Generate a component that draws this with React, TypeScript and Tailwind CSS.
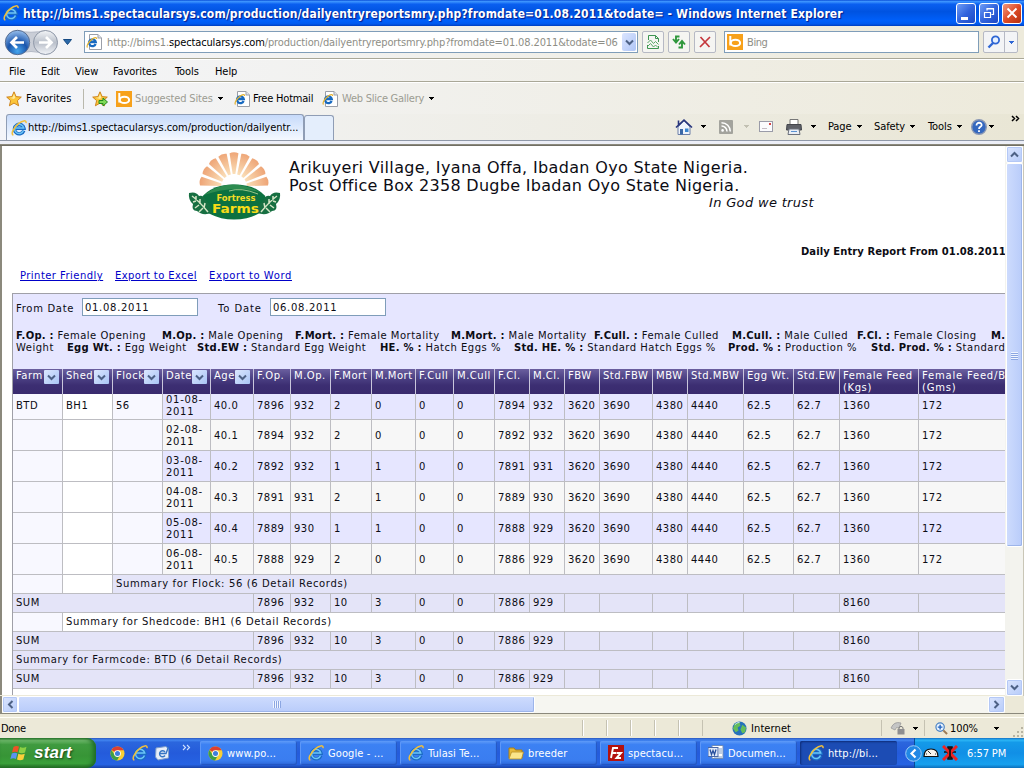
import React from "react";

const TAHOMA = "font-['DejaVu_Sans_Condensed','DejaVu_Sans',sans-serif]";
const VERDANA = "font-['DejaVu_Sans',sans-serif]";

function IE({ className = "w-4 h-4" }: { className?: string }) {
  return (
    <svg viewBox="0 0 16 16" className={`shrink-0 ${className}`}>
      <path d="M12.800 10.600A4.800 4.800 0 1 1 13 8.300H4.500" fill="none" stroke="#1a6cc4" strokeWidth="3.400" />
      <path d="M12.500 10.600A4.600 4.600 0 1 1 12.700 8H4.500" fill="none" stroke="#6cc4f7" strokeWidth="1.500" />
      <path d="M2.400 15C-.6 14.500 2.400 7.600 7.500 3.600 11.400.4 15.600-.3 15 3.200" fill="none" stroke="#f0bf3c" strokeWidth="1.500" />
    </svg>
  );
}

function IEPage({ className = "w-4 h-4" }: { className?: string }) {
  return (
    <svg viewBox="0 0 16 16" className={`shrink-0 ${className}`}>
      <path d="M3.500.5H12L15.500 4V15.500H3.500Z" fill="#fff" stroke="#9b9fa8" />
      <path d="M12 .5V4h3.500" fill="#dfe3ea" stroke="#9b9fa8" />
      <path d="M9.600 10A3.400 3.400 0 1 1 9.800 8.200H4" fill="none" stroke="#1769c0" strokeWidth="2.300" />
      <path d="M1.500 13.500C0 12 3 7.500 6 5.300 8.500 3.300 11 3 10.600 5" fill="none" stroke="#e5b32f" strokeWidth="1.200" />
    </svg>
  );
}

function Bing() {
  return (
    <svg viewBox="0 0 16 16" className="h-4 w-4 shrink-0">
      <rect width="16" height="16" fill="#f7a11b" />
      <path d="M3.300 2v9.500" stroke="#fff" strokeWidth="2" />
      <ellipse cx="8.400" cy="8.900" rx="4.700" ry="3.100" fill="none" stroke="#fff" strokeWidth="2.100" />
    </svg>
  );
}

function Star({ add = false }: { add?: boolean }) {
  return (
    <svg viewBox="0 0 16 16" className="h-4 w-4 shrink-0">
      <path d="M8 .8 10.100 5.600 15.300 6.100 11.400 9.600 12.600 14.800 8 12.100 3.400 14.800 4.600 9.600.7 6.100 5.900 5.600Z" fill="#fbc53a" stroke="#c97a12" strokeWidth=".9" />
      <path d="M8 2.800 9.300 6.400 8 8 3.500 6.800 6.500 6.500Z" fill="#ffeb9c" />
      {add && <path d="M7 9.500h4V7l4.500 4L11 15v-2.500H7Z" fill="#7ed957" stroke="#248a1d" />}
    </svg>
  );
}

function Chrome() {
  return (
    <svg viewBox="0 0 16 16" className="h-[15px] w-[15px] shrink-0">
      <circle cx="8" cy="8" r="7.500" fill="#f7cf35" />
      <path d="M8 8 1.500 4.300A7.500 7.500 0 0 1 14.500 4.500L8 4.500Z" fill="#dd4032" />
      <path d="M1.500 4.300A7.500 7.500 0 0 0 7.500 15.500L10.500 10 5 9.500Z" fill="#3f9f47" />
      <circle cx="8" cy="8" r="3.600" fill="#fff" />
      <circle cx="8" cy="8" r="2.700" fill="#3f7edb" />
    </svg>
  );
}

function Caret({ className = "text-black" }: { className?: string }) {
  return (
    <svg viewBox="0 0 5 3" className={`h-[3px] w-[5px] shrink-0 ${className}`} shapeRendering="crispEdges">
      <path d="M0 0h5L2.500 3Z" fill="currentColor" />
    </svg>
  );
}

function Chevron({ dir = "down", className = "h-[9px] w-[9px]" }: { dir?: string; className?: string }) {
  const d: Record<string, string> = {
    down: "M1 2.500 4.500 6 8 2.500",
    up: "M1 6.500 4.500 3 8 6.500",
    left: "M6.500 1 3 4.500 6.500 8",
    right: "M2.500 1 6 4.500 2.500 8",
  };
  return (
    <svg viewBox="0 0 9 9" className={`shrink-0 ${className}`}>
      <path d={d[dir]} fill="none" stroke="#4d6185" strokeWidth="2" />
    </svg>
  );
}

function ScrollButton({ dir, className = "h-[17px] w-[17px]" }: { dir: string; className?: string }) {
  return (
    <div className={`flex shrink-0 items-center justify-center rounded-[2px] border border-white bg-gradient-to-br from-[#dbe5fe] to-[#b6cbf9] shadow-[inset_0_0_0_1px_#b4c8f6] ${className}`}>
      <Chevron dir={dir} />
    </div>
  );
}

function TitleBar() {
  return (
    <div className="flex h-[26px] items-center bg-[linear-gradient(180deg,#0a4fd8_0%,#3d95ff_6%,#0a5ff0_16%,#0053e1_45%,#0060fb_80%,#0059ee_92%,#003dbd_100%)] pl-[3px] pr-[2px]">
      <IE />
      <span className="ml-[4px] w-[940px] whitespace-nowrap pt-px font-['DejaVu_Sans_Condensed','DejaVu_Sans',sans-serif] text-[12px] font-bold tracking-[0.14px] text-white [text-shadow:1px_1px_1px_#0a1883]">
        http://bims1.spectacularsys.com/production/dailyentryreportsmry.php?fromdate=01.08.2011&amp;todate= - Windows Internet Explorer
      </span>
      <div className="flex shrink-0 gap-[3px]">
        <div className="flex h-[21px] w-5 rounded-[3px] border border-white bg-gradient-to-br from-[#6f9cf6] via-[#3264dd] to-[#1d48c6] pl-[4px] pt-[13px]">
          <div className="h-[3px] w-[7px] bg-white" />
        </div>
        <div className="flex h-[21px] w-5 items-center justify-center rounded-[3px] border border-white bg-gradient-to-br from-[#6f9cf6] via-[#3264dd] to-[#1d48c6]">
          <svg viewBox="0 0 12 12" className="h-3 w-3">
            <path d="M4 3.500V1.500H10.500V7.500H8.500M4 2h7M1.500 5.500H7.500V10.500H1.500ZM1 5.500H8" fill="none" stroke="#fff" strokeWidth="1.200" />
          </svg>
        </div>
        <div className="flex h-[21px] w-5 items-center justify-center rounded-[3px] border border-white bg-gradient-to-br from-[#f0957b] via-[#dd4c26] to-[#b52f0c]">
          <svg viewBox="0 0 12 12" className="h-3 w-3">
            <path d="M1.500 1.500 10.500 10.500M10.500 1.500 1.500 10.500" stroke="#fff" strokeWidth="1.900" />
          </svg>
        </div>
      </div>
    </div>
  );
}

function ToolButton({ children }: { children: React.ReactNode }) {
  return (
    <div className="flex h-[22px] w-[22px] shrink-0 items-center justify-center rounded-[2px] border border-[#b6b9c4] bg-[#f5f5f2]">
      {children}
    </div>
  );
}

function AddressRow() {
  return (
    <div className="flex h-[33px] items-center border-b border-[#a9a797] bg-gradient-to-r from-[#f4f5f9] to-[#edeadb] pl-[4px]">
      <svg viewBox="0 0 56 29" className="h-[29px] w-[56px] shrink-0">
        <defs>
          <radialGradient id="bk" cx=".5" cy=".85" r=".8">
            <stop offset="0" stopColor="#47a7ee" />
            <stop offset=".5" stopColor="#1a55ac" />
            <stop offset="1" stopColor="#8ab4e6" />
          </radialGradient>
          <linearGradient id="fw" x1="0" y1="0" x2="0" y2="1">
            <stop offset="0" stopColor="#f4f6f8" />
            <stop offset=".5" stopColor="#b9bfca" />
            <stop offset="1" stopColor="#f2f4f8" />
          </linearGradient>
        </defs>
        <path d="M12 2.500Q27 6 42 2.500V25Q27 22 12 25Z" fill="#c9cdd6" stroke="#b4bac6" />
        <circle cx="13.500" cy="14.500" r="12.200" fill="url(#bk)" stroke="#5a6f92" />
        <circle cx="41.500" cy="14.500" r="12" fill="url(#fw)" stroke="#8e97a7" />
        <path d="M20 14.500H8M13 9 7.500 14.500 13 20" fill="none" stroke="#fff" strokeWidth="2.700" />
        <path d="M35 14.500H47M42 9 47.500 14.500 42 20" fill="none" stroke="#fff" strokeWidth="2.700" />
      </svg>
      <svg viewBox="0 0 9 6" className="ml-[3px] h-[6px] w-[9px] shrink-0">
        <path d="M.5.5h8L4.500 5.500Z" fill="#2b68a8" stroke="#164a83" />
      </svg>
      <div className={`ml-[12px] flex h-[22px] w-[554px] shrink-0 items-center border border-[#7f9db9] bg-white pl-[1px] pr-[1px] ${TAHOMA}`}>
        <IEPage />
        <span className="ml-[5px] w-[517px] whitespace-nowrap pt-[2px] text-[11px] tracking-[-0.125px] text-[#8e8e86]">
          http://bims1.<span className="text-black">spectacularsys.com</span>/production/dailyentryreportsmry.php?fromdate=01.08.2011&amp;todate=06
        </span>
        <div className="ml-auto flex h-[18px] w-[14px] shrink-0 items-center justify-center rounded-[2px] bg-gradient-to-br from-[#dbe5fe] to-[#afc5f6]">
          <Chevron />
        </div>
      </div>
      <div className="ml-[4px] flex gap-[4px]">
        <ToolButton>
          <svg viewBox="0 0 16 16" className="h-4 w-4">
            <path d="M3.500 6V1.500H10.500L13.500 4.500V8M2.500 11V14.500H13.500V12M10.500 1.500V4.500h3" fill="none" stroke="#3d9451" strokeWidth="1" />
            <path d="M2.500 9 5.500 6 8.500 9.500 10.500 7.500 13.500 10.500M2.500 12.500 5.500 9.500 8.500 13 10.500 11 13 13.500" fill="none" stroke="#58a868" strokeWidth="1" />
          </svg>
        </ToolButton>
        <ToolButton>
          <svg viewBox="0 0 16 16" className="h-4 w-4">
            <path d="M8.500 2.500H5V8M2 5 5 8.500 8 5" fill="none" stroke="#2f973c" strokeWidth="1.900" />
            <path d="M7.500 13.500H11V7.500M8 10.500 11 7 14 10.500" fill="none" stroke="#2f973c" strokeWidth="1.900" />
          </svg>
        </ToolButton>
        <ToolButton>
          <svg viewBox="0 0 16 16" className="h-4 w-4">
            <path d="M3.500 3 12.500 13M13 3 3 13" stroke="#c5383d" strokeWidth="1.700" />
          </svg>
        </ToolButton>
      </div>
      <div className={`ml-[8px] flex h-[22px] w-[255px] shrink-0 items-center border border-[#7f9db9] bg-white pl-[2px] text-[11px] text-[#8e8e86] ${TAHOMA}`}>
        <Bing />
        <span className="ml-[4px] pt-[2px] tracking-[-0.4px]">Bing</span>
      </div>
      <div className="ml-[4px] flex h-[22px] w-[35px] shrink-0 rounded-[2px] border border-[#b6b9c4] bg-[#f3f4f6]">
        <div className="flex w-[21px] items-center justify-center border-r border-[#b6b9c4]">
          <svg viewBox="0 0 14 14" className="h-[14px] w-[14px]">
            <circle cx="8.500" cy="5" r="3.600" fill="#e7f1ff" stroke="#2f66d4" strokeWidth="1.800" />
            <path d="M6 8 1.500 12.500" stroke="#2f66d4" strokeWidth="2.400" />
          </svg>
        </div>
        <div className="flex flex-1 items-center justify-center">
          <Caret className="text-[#2f66d4]" />
        </div>
      </div>
    </div>
  );
}

const menus: [string, string][] = [
  ["File", "w-[32px]"],
  ["Edit", "w-[34px]"],
  ["View", "w-[38px]"],
  ["Favorites", "w-[62px]"],
  ["Tools", "w-[40px]"],
  ["Help", "w-[30px]"],
];

function MenuRow() {
  return (
    <div className={`flex h-[23px] items-center border-b border-[#a9a797] border-t border-t-white bg-gradient-to-r from-[#f4f5f9] to-[#edeadb] pl-[9px] pt-[3px] text-[11px] tracking-[-0.08px] text-black ${TAHOMA}`}>
      {menus.map(([m, w]) => (
        <span key={m} className={`shrink-0 whitespace-nowrap ${w}`}>{m}</span>
      ))}
    </div>
  );
}

function FavoritesRow() {
  return (
    <div className={`flex h-[32px] items-center whitespace-nowrap border-t border-white bg-gradient-to-r from-[#f4f5f9] to-[#edeadb] pl-[6px] text-[11px] tracking-[-0.2px] ${TAHOMA}`}>
      <Star />
      <span className="ml-[4px] w-[57px] shrink-0 pt-[2px] tracking-[0.1px]">Favorites</span>
      <div className="h-[20px] w-px bg-[#b9b8ac]" />
      <div className="ml-[8px] flex items-center"><Star add /></div>
      <div className="ml-[8px] flex items-center"><Bing /></div>
      <span className="ml-[3px] w-[83px] shrink-0 pt-[2px] tracking-[-0.15px] text-[#9c9c92]">Suggested Sites</span>
      <Caret />
      <div className="ml-[11px] flex items-center"><IEPage /></div>
      <span className="ml-[3px] w-[69px] shrink-0 pt-[2px]">Free Hotmail</span>
      <IEPage />
      <span className="ml-[4px] w-[87px] shrink-0 pt-[2px] tracking-[-0.25px] text-[#9c9c92]">Web Slice Gallery</span>
      <Caret />
    </div>
  );
}

function TabRow() {
  return (
    <div className={`flex h-[31px] shrink-0 flex-col bg-gradient-to-r from-[#f4f5f9] to-[#e9e6d5] text-[11px] ${TAHOMA}`}>
      <div className="flex h-[27px] items-end whitespace-nowrap border-b border-[#8f98a8] pl-[6px]">
        <div className="flex h-[26px] w-[298px] shrink-0 items-center rounded-t-[3px] border border-b-0 border-[#8f9db5] bg-gradient-to-b from-[#c6dafa] to-[#f5f9ff] pl-[4px]">
          <IE />
          <span className="ml-px pt-[2px] tracking-[-0.06px]">http://bims1.spectacularsys.com/production/dailyentr...</span>
        </div>
        <div className="h-[25px] w-[30px] shrink-0 rounded-t-[3px] border border-b-0 border-[#8f9db5] bg-[#e4eefc]" />
        <div className="ml-[341px] flex h-[27px] items-center tracking-[-0.1px]">
          <svg viewBox="0 0 18 18" className="h-[18px] w-[18px] shrink-0">
            <path d="M3 9v7.500h12V9L9 3Z" fill="#eef3fb" stroke="#6b7fa8" />
            <path d="M1 9.500 9 2l8 7.500M3.500 7V2.500" fill="none" stroke="#26337c" strokeWidth="1.600" />
            <path d="M5 11h3v5.500H5Z" fill="#3a68a8" /><path d="M10 10.500h3.500V14H10Z" fill="#3b86d0" />
          </svg>
          <div className="ml-[8px] flex w-[18px]"><Caret /></div>
          <svg viewBox="0 0 14 14" className="h-[14px] w-[14px] shrink-0">
            <rect width="14" height="14" rx="1" fill="#a3a39d" />
            <circle cx="3.600" cy="10.400" r="1.300" fill="#fff" />
            <path d="M2.500 6A5.500 5.500 0 0 1 8 11.500M2.500 2.700A8.800 8.800 0 0 1 11.300 11.500" fill="none" stroke="#fff" strokeWidth="1.500" />
          </svg>
          <div className="ml-[11px] flex w-[15px]"><Caret className="text-[#c2c0b2]" /></div>
          <svg viewBox="0 0 14 11" className="h-[11px] w-[14px] shrink-0">
            <rect x=".5" y=".5" width="13" height="10" fill="#fbfbfd" stroke="#9a9ba8" />
            <path d="M10 2h2v2h-2Z" fill="#d64545" /><path d="M3 7.500h5" stroke="#c4bcc4" />
          </svg>
          <svg viewBox="0 0 16 16" className="ml-[13px] h-4 w-4 shrink-0">
            <path d="M4 6V.5h8V6" fill="#fff" stroke="#777" />
            <path d="M1 5.500h14l.5 5.500H.5Z" fill="#5e6067" stroke="#44464c" />
            <path d="M3 10h10l1 5.500H2Z" fill="#e9edf5" stroke="#6b707c" /><path d="M5 12.500h6" stroke="#5a92d2" />
          </svg>
          <div className="ml-[9px] flex w-[16px]"><Caret /></div>
          <span className="ml-px w-[29px] pt-px">Page</span><Caret />
          <span className="ml-[12px] w-[36px] pt-px">Safety</span><Caret />
          <span className="ml-[13px] w-[29px] pt-px">Tools</span><Caret />
          <svg viewBox="0 0 16 16" className="ml-[9px] h-4 w-4 shrink-0">
            <circle cx="8" cy="8" r="7.300" fill="#3468bf" stroke="#8b98b4" strokeWidth="1.400" />
            <path d="M5.500 6.500C5.500 2.500 11 3.200 10.600 6.300 10.300 7.900 8 7.900 8 10M8 11.300V13" fill="none" stroke="#fff" strokeWidth="1.800" />
          </svg>
          <div className="ml-[2px] flex w-[22px]"><Caret /></div>
          <svg viewBox="0 0 9 7" className="mb-[16px] h-[7px] w-[9px]">
            <path d="M1 1 3.500 3.500 1 6M5 1 7.500 3.500 5 6" fill="none" stroke="#000" strokeWidth="1.500" />
          </svg>
        </div>
      </div>
      <div className="h-[4px] border-b border-[#8b897c] bg-[#eceef6]" />
    </div>
  );
}

function Logo() {
  const rays = [-80, -60, -40, -20, 0, 20, 40, 60, 80];
  return (
    <svg viewBox="0 0 96 70" className="h-[70px] w-[96px] shrink-0">
      <defs>
        <radialGradient id="ray" gradientUnits="userSpaceOnUse" cx="47" cy="36" r="36">
          <stop offset=".3" stopColor="#fbe3bd" />
          <stop offset="1" stopColor="#eda071" />
        </radialGradient>
      </defs>
      <g fill="url(#ray)">
        {rays.map((a) => {
          const p = (r: number, d: number) => {
            const t = ((a + d) * Math.PI) / 180;
            return `${47 + r * Math.sin(t)} ${37 - r * Math.cos(t)}`;
          };
          return <path key={a} d={`M${p(13, -6)} L${p(34, -7.5)} Q${p(36, 0)} ${p(34, 7.5)} L${p(13, 6)}Z`} />;
        })}
      </g>
      <ellipse cx="47" cy="52" rx="33" ry="17.500" fill="#0c7140" />
      <path d="M17 45Q42 25 75 43Q48 34 17 45Z" fill="#2d8b4f" />
      <path d="M42 41Q54 37 71 44" fill="none" stroke="#bcd99a" strokeWidth=".8" />
      <g>
        <path d="M2 43Q9 41 12 46Q17 45 19 51Q25 55 25 63Q15 66 10 61Q4 61 6 54Q1 50 2 43Z" fill="#176f42" />
        <path d="M5 46Q12 51 21 62M9 50V46M13 54V49M9 51 6 52M12 55 8 58M16 58 12 62M17 58 18 53" fill="none" stroke="#d4e5c5" strokeWidth="1.500" />
        <path d="M93 43Q86 41 83 46Q78 45 76 51Q70 55 70 63Q80 66 85 61Q91 61 89 54Q94 50 93 43Z" fill="#176f42" />
        <path d="M90 46Q83 51 74 62M86 50V46M82 54V49M86 51 89 52M83 55 87 58M79 58 83 62M78 58 77 53" fill="none" stroke="#d4e5c5" strokeWidth="1.500" />
      </g>
      <text x="49" y="50.500" textAnchor="middle" fontFamily="DejaVu Sans" fontWeight="700" fontSize="8" textLength="39" lengthAdjust="spacingAndGlyphs" fill="#f4dd25">Fortress</text>
      <text x="48.500" y="62.500" textAnchor="middle" fontFamily="DejaVu Sans" fontWeight="700" fontSize="12.500" textLength="47" lengthAdjust="spacingAndGlyphs" fill="#f8dc17">Farms</text>
    </svg>
  );
}

const legend1: [string, string, string][] = [
  ["F.Op. :", "Female Opening", "w-[146px]"],
  ["M.Op. :", "Male Opening", "w-[133px]"],
  ["F.Mort. :", "Female Mortality", "w-[156px]"],
  ["M.Mort. :", "Male Mortality", "w-[143px]"],
  ["F.Cull. :", "Female Culled", "w-[138px]"],
  ["M.Cull. :", "Male Culled", "w-[125px]"],
  ["F.Cl. :", "Female Closing", "w-[134px]"],
  ["M.Cl. :", "", "w-[60px]"],
];
const legend2: [string, string, string][] = [
  ["", "Weight", "w-[51px]"],
  ["Egg Wt. :", "Egg Weight", "w-[130px]"],
  ["Std.EW :", "Standard Egg Weight", "w-[183px]"],
  ["HE. % :", "Hatch Eggs %", "w-[134px]"],
  ["Std. HE. % :", "Standard Hatch Eggs %", "w-[214px]"],
  ["Prod. % :", "Production %", "w-[143px]"],
  ["Std. Prod. % :", "Standard", "w-[160px]"],
];

function Legend({ items }: { items: [string, string, string][] }) {
  return (
    <div className="flex h-[12px] whitespace-nowrap leading-[12px]">
      {items.map(([k, v, w]) => (
        <span key={k + v} className={`shrink-0 ${w}`}>
          {k && <b className="tracking-[0.25px]">{k} </b>}
          {v}
        </span>
      ))}
    </div>
  );
}

const GRID =
  "grid grid-cols-[50px_50px_50px_48px_43px_37px_40px_41px_44px_38px_41px_35px_35px_35px_53px_35px_56px_50px_46px_79px_120px]";
const CELL = "flex items-center whitespace-nowrap border-b border-r border-[#bdbdc2] pl-[3px] leading-[12px]";

const headers = ["Farm", "Shed", "Flock", "Date", "Age", "F.Op.", "M.Op.", "F.Mort", "M.Mort", "F.Cull", "M.Cull", "F.Cl.", "M.Cl.", "FBW", "Std.FBW", "MBW", "Std.MBW", "Egg Wt.", "Std.EW", "Female Feed (Kgs)", "Female Feed/Bird (Gms)"];

const days: string[][] = [
  ["01", "40.0", "7896", "932", "2", "0", "7894", "932"],
  ["02", "40.1", "7894", "932", "2", "0", "7892", "932"],
  ["03", "40.2", "7892", "932", "1", "1", "7891", "931"],
  ["04", "40.3", "7891", "931", "2", "1", "7889", "930"],
  ["05", "40.4", "7889", "930", "1", "1", "7888", "929"],
  ["06", "40.5", "7888", "929", "2", "0", "7886", "929"],
];

function DayRow({ day, index }: { day: string[]; index: number }) {
  const [d, age, fop, mop, fm, mm, fcl, mcl] = day;
  const vals = [age, fop, mop, fm, mm, "0", "0", fcl, mcl, "3620", "3690", "4380", "4440", "62.5", "62.7", "1360", "172"];
  const bg = index % 2 === 0 ? "bg-[#e6e6ff]" : "bg-[#f7f7f7]";
  const pad = index === 0 ? "pb-[1px]" : "pt-[2px]";
  return (
    <div className={`${GRID} ${index === 0 ? "h-[26px]" : "h-[31px]"}`}>
      <div className={`${CELL} ${pad} bg-[#f8f8ff]`}>{index === 0 && "BTD"}</div>
      <div className={`${CELL} ${pad} bg-white`}>{index === 0 && "BH1"}</div>
      <div className={`${CELL} ${pad} bg-[#f8f8ff]`}>{index === 0 && "56"}</div>
      <div className={`${CELL} ${pad} tracking-[0.7px] ${bg}`}><span>{d}-08-<br />2011</span></div>
      {vals.map((v, i) => (
        <div key={i} className={`${CELL} ${pad} ${bg}`}>{v}</div>
      ))}
    </div>
  );
}

function SumRow() {
  const vals = ["7896", "932", "10", "3", "0", "0", "7886", "929", "", "", "", "", "", "", "8160", ""];
  return (
    <div className={`${GRID} h-[19px] bg-[#e4e4f8]`}>
      <div className={`${CELL} col-span-5`}>SUM</div>
      {vals.map((v, i) => (
        <div key={i} className={CELL}>{v}</div>
      ))}
    </div>
  );
}

function Report() {
  return (
    <div className={`h-[549px] w-[1005px] shrink-0 overflow-hidden border-l-2 border-[#8b897c] bg-white text-[#0c0c14] ${VERDANA}`}>
      <div className="flex h-[97px] pl-[185px] pt-[4px]">
        <Logo />
        <div className="ml-[6px] flex w-[560px] shrink-0 flex-col whitespace-nowrap pt-[9px]">
          <span className="text-[16px] leading-[18px] tracking-[0.35px]">Arikuyeri Village, Iyana Offa, Ibadan Oyo State Nigeria.</span>
          <span className="text-[16px] leading-[18px] tracking-[0.29px]">Post Office Box 2358 Dugbe Ibadan Oyo State Nigeria.</span>
          <span className="pl-[420px] text-[13px] italic leading-[16px] tracking-[0.33px]">In God we trust</span>
        </div>
      </div>
      <div className="h-[26px] whitespace-nowrap pl-[799px] pt-[2px] text-[10px] font-bold leading-[14px] tracking-[0.07px]">
        Daily Entry Report From 01.08.2011
      </div>
      <div className="flex h-[24px] whitespace-nowrap pl-[18px] text-[10px] leading-[13px] tracking-[0.45px] text-[#0000c8] underline">
        <a className="w-[95px]">Printer Friendly</a>
        <a className="w-[94px] tracking-[0.42px]">Export to Excel</a>
        <a className="tracking-[0.57px]">Export to Word</a>
      </div>
      <div className="ml-[10px] w-[1030px] border-l border-t border-[#a0a0a8] text-[10px] tracking-[0.5px]">
        <div className="h-[75px] bg-[#e6e6ff] pl-[3px] pt-[4px]">
          <div className="flex h-[32px] items-start leading-[12px]">
            <span className="w-[66px] shrink-0 pt-[5px] tracking-[0.7px]">From Date</span>
            <div className="h-[18px] w-[116px] shrink-0 border border-[#7f9db9] bg-white pl-[2px] leading-[17px] tracking-[0.7px]">01.08.2011</div>
            <span className="ml-[20px] w-[52px] shrink-0 pt-[5px] tracking-[0.9px]">To Date</span>
            <div className="h-[18px] w-[116px] shrink-0 border border-[#7f9db9] bg-white pl-[2px] leading-[17px] tracking-[0.7px]">06.08.2011</div>
          </div>
          <Legend items={legend1} />
          <Legend items={legend2} />
        </div>
        <div className={`${GRID} h-[25px] bg-[linear-gradient(180deg,#6b5f9f_0%,#4d4285_35%,#3c2e72_65%,#392b6e_100%)] leading-[12px] text-white`}>
          {headers.map((h, i) => (
            <div key={h} className="flex items-start border-r border-[#c9c6dc] pl-[3px] pt-[1px]">
              <span className={i === 20 ? "tracking-[0.8px]" : i === 19 ? "tracking-[0.6px]" : "whitespace-nowrap"}>{h}</span>
              {i < 5 && (
                <div className="ml-auto mr-[3px] flex h-[14px] w-[15px] shrink-0 items-center justify-center rounded-[1px] bg-gradient-to-br from-[#dbe7fe] to-[#a9c4f5]">
                  <Chevron />
                </div>
              )}
            </div>
          ))}
        </div>
        {days.map((d, i) => (
          <DayRow key={d[0]} day={d} index={i} />
        ))}
        <div className={`${GRID} h-[19px] tracking-[0.63px]`}>
          <div className={`${CELL} bg-[#f8f8ff]`} />
          <div className={`${CELL} bg-white`} />
          <div className={`${CELL} col-[3/-1] bg-[#e4e4f8]`}>Summary for Flock: 56 (6 Detail Records)</div>
        </div>
        <SumRow />
        <div className={`${GRID} h-[19px] tracking-[0.63px]`}>
          <div className={`${CELL} bg-[#f8f8ff]`} />
          <div className={`${CELL} col-[2/-1] bg-white`}>Summary for Shedcode: BH1 (6 Detail Records)</div>
        </div>
        <SumRow />
        <div className={`${GRID} h-[19px] tracking-[0.66px]`}>
          <div className={`${CELL} col-span-full bg-[#e4e4f8]`}>Summary for Farmcode: BTD (6 Detail Records)</div>
        </div>
        <SumRow />
        <div className="h-[12px]" />
      </div>
    </div>
  );
}

const tasks: [string, React.ReactNode, boolean][] = [
  ["www.po...", <Chrome />, false],
  ["Google - ...", <IE />, false],
  ["Tulasi Te...", <IE />, false],
  [
    "breeder",
    <svg viewBox="0 0 16 14" className="h-[14px] w-4 shrink-0">
      <path d="M1 12V2h5l1.500 2H14v8Z" fill="#e6b93a" stroke="#a87e14" />
      <path d="M1 13 3.500 6h12L13.500 13Z" fill="#fbe58a" stroke="#b98e22" strokeWidth=".8" />
    </svg>,
    false,
  ],
  [
    "spectacu...",
    <svg viewBox="0 0 16 16" className="h-4 w-4 shrink-0">
      <rect width="16" height="16" fill="#b3120f" />
      <path d="M3 13 5 3h5M4.200 8H8M8.500 8H13L8.500 13H13" fill="none" stroke="#fff" strokeWidth="1.900" />
    </svg>,
    false,
  ],
  [
    "Documen...",
    <svg viewBox="0 0 16 16" className="h-4 w-4 shrink-0">
      <path d="M4 .5h11V13.500H4Z" fill="#fff" stroke="#6e8cb8" />
      <path d="M11 4h3M11 6h3M11 8h3M6 12h8" stroke="#7a9bc8" />
      <rect y="2.500" width="10" height="9" fill="#dfe9f8" stroke="#4868a8" />
      <path d="M2 4.500 3.500 9.500 5 5.500 6.500 9.500 8 4.500" fill="none" stroke="#274f9d" strokeWidth="1.300" />
    </svg>,
    false,
  ],
  ["http://bi...", <IE />, true],
];

function StatusBar() {
  return (
    <div className={`flex h-[20px] items-center bg-[#ece9d8] text-[11px] tracking-[-0.1px] ${TAHOMA}`}>
      <span className="w-[582px] shrink-0 pl-[1px] pt-[2px] tracking-[-0.35px]">Done</span>
      {[0, 1, 2, 3, 4].map((i) => (
        <div key={i} className="h-[16px] w-6 shrink-0 border-l border-[#c5c2b2] shadow-[inset_1px_0_0_#fff]" />
      ))}
      <div className="h-[16px] w-6 shrink-0 border-l border-[#c5c2b2]" />
      <svg viewBox="0 0 16 16" className="ml-[6px] h-[15px] w-[15px] shrink-0">
        <circle cx="8" cy="8" r="7.500" fill="#2671bb" />
        <path d="M3 3 8 1 9 5 6 7 7 10 4 12 1 8ZM11 4l4 3-1 5-3 1-2-4Z" fill="#65bd59" />
        <path d="M3 4Q5 1.500 8 1.500" stroke="#cfe8ff" fill="none" />
      </svg>
      <span className="ml-[4px] w-[130px] shrink-0 pt-[2px] tracking-[0.1px]">Internet</span>
      <div className="h-[16px] w-[9px] shrink-0 border-l border-[#c5c2b2]" />
      <svg viewBox="0 0 16 16" className="h-4 w-4 shrink-0">
        <path d="M1 8Q4 1 11 3L9 8Q6 6 5 10Z" fill="#c4c5c5" stroke="#9a9b9b" strokeWidth=".8" />
        <rect x="7.500" y="9" width="7" height="5.500" fill="#8e8e90" /><path d="M9 9V7.500Q11 5 13 7.500V9" fill="none" stroke="#777" />
      </svg>
      <div className="ml-[7px] flex w-[13px]"><Caret /></div>
      <div className="ml-[1px] h-[16px] w-[13px] border-l border-[#c5c2b2]" />
      <svg viewBox="0 0 14 14" className="h-[13px] w-[13px] shrink-0">
        <circle cx="5.500" cy="5.500" r="4.500" fill="#e8f4ff" stroke="#4a82c4" strokeWidth="1.300" />
        <path d="M3 5.500h5M5.500 3v5" stroke="#2364c0" strokeWidth="1.500" /><path d="m9 9 4 4" stroke="#9b7b55" strokeWidth="2.200" />
      </svg>
      <span className="ml-[2px] w-[44px] shrink-0 pt-[2px]">100%</span>
      <Caret />
      <svg viewBox="0 0 12 12" className="ml-[13px] mt-[8px] h-3 w-3 shrink-0">
        <path d="M9 1h2v2H9ZM9 5h2v2H9ZM5 5h2v2H5ZM9 9h2v2H9ZM5 9h2v2H5ZM1 9h2v2H1Z" fill="#b8b4a2" />
      </svg>
    </div>
  );
}

function Taskbar() {
  return (
    <div className={`flex h-[30px] shrink-0 items-stretch overflow-hidden whitespace-nowrap bg-[linear-gradient(180deg,#2b58bf_0%,#4285f0_7%,#2b66dd_14%,#245bdb_50%,#2663e3_88%,#1941a5_100%)] text-[11px] text-white ${TAHOMA}`}>
      <div className="flex w-[96px] shrink-0 items-center rounded-r-[9px] bg-[linear-gradient(180deg,#2f7a2f_0%,#6fb96b_8%,#3f9a3f_22%,#379536_60%,#3aa03a_85%,#236c23_100%)] pl-[10px] shadow-[inset_-3px_0_4px_#1f6b26]">
        <svg viewBox="0 0 18 18" className="h-[18px] w-[18px] shrink-0">
          <path d="M3.500 3Q6 1 9 2.600L7.600 8.300Q5 6.900 2 8.500Z" fill="#ef5327" />
          <path d="M10 3Q13 4.500 16.500 2.800L15 8.500Q12 10 8.600 8.600Z" fill="#8cd044" />
          <path d="M1.800 9.600Q5 8 7.300 9.500L5.900 15Q3 13.500.3 15.200Z" fill="#5a93f0" />
          <path d="M8.300 9.800Q11.500 11.300 14.800 9.700L13.300 15.500Q10 17 7 15.500Z" fill="#fbd03a" />
        </svg>
        <span className="ml-[6px] font-['Liberation_Sans',sans-serif] text-[17px] font-bold italic tracking-[0.2px] [text-shadow:1px_1px_2px_#174517]">start</span>
      </div>
      <div className="flex w-[104px] shrink-0 items-center pl-[14px]">
        <Chrome />
        <div className="ml-[7px] flex"><IE /></div>
        <svg viewBox="0 0 16 16" className="ml-[6px] h-4 w-4 shrink-0">
          <path d="M2 3 12 1.500 14.500 4V13L4 15 1.500 12Z" fill="#e7eef9" stroke="#7c9cc9" />
          <path d="M11 7A3 3 0 1 0 11 10.500M6 8.500h6L14.500 2" fill="none" stroke="#3575c4" strokeWidth="1.400" />
        </svg>
        <svg viewBox="0 0 9 7" className="mb-[11px] ml-[12px] h-[7px] w-[9px]">
          <path d="M1 1 3.500 3.500 1 6M5 1 7.500 3.500 5 6" fill="none" stroke="#cfe0ff" strokeWidth="1.100" />
        </svg>
      </div>
      <div className="flex shrink-0 gap-[3px] pt-[3px]">
        {tasks.map(([label, icon, active], i) => (
          <div
            key={i}
            className={`flex h-[24px] w-[97px] shrink-0 items-center rounded-[2px] pl-[8px] ${
              active
                ? "bg-[#1c4cb4] shadow-[inset_1px_1px_2px_#0e2c78]"
                : "bg-[linear-gradient(180deg,#5f9bf8_0%,#3c81f3_15%,#3a7df0_80%,#2c66d8_100%)] shadow-[inset_-1px_-1px_1px_#2456c0,inset_1px_0_0_#5d97f8]"
            }`}
          >
            {icon}
            <span className="ml-[4px] pt-[2px] tracking-[0.1px]">{label}</span>
          </div>
        ))}
      </div>
      <div className="ml-auto flex w-[110px] shrink-0 items-center bg-[linear-gradient(180deg,#1470c4_0%,#2bb5f5_7%,#149ae9_15%,#118fe6_50%,#17a0ee_88%,#0c6fbb_100%)] shadow-[inset_1px_0_0_#0a4b96]">
        <svg viewBox="0 0 17 17" className="-ml-[9px] h-[17px] w-[17px] shrink-0">
          <circle cx="8.500" cy="8.500" r="7.800" fill="#2188e5" stroke="#9ecbf7" />
          <path d="M10.500 4.500 6.500 8.500 10.500 12.500" fill="none" stroke="#fff" strokeWidth="2.200" />
        </svg>
        <svg viewBox="0 0 16 12" className="ml-[1px] h-3 w-4 shrink-0">
          <path d="M1 9.500Q1 2 8 2T15 9.500Z" fill="#f3f3ef" stroke="#111" strokeWidth="1.200" />
          <path d="M8 7 5 4M3 7h1M12 7h1" stroke="#333" />
        </svg>
        <svg viewBox="0 0 16 16" className="ml-[3px] h-4 w-4 shrink-0">
          <path d="M6 2h4v12H6ZM2 7h12" stroke="#111" fill="#641313" strokeWidth="1.500" />
          <path d="M1 1 15 15M15 1 1 15" stroke="#ed2323" strokeWidth="3" /><path d="M7 3h2v11H7Z" fill="#231717" />
        </svg>
        <span className="ml-[9px] pt-[2px] tracking-[-0.1px]">6:57 PM</span>
      </div>
    </div>
  );
}

export default function App() {
  return (
    <div className="flex h-[768px] w-[1024px] flex-col overflow-hidden bg-[#ece9d8]">
      <TitleBar />
      <AddressRow />
      <MenuRow />
      <FavoritesRow />
      <TabRow />
      <div className="flex h-[551px] shrink-0 border-t border-[#716f64]">
        <Report />
        <div className="flex w-[18px] flex-col items-center bg-[#f3f3ee] pl-px">
          <ScrollButton dir="up" />
          <div className="flex h-[384px] w-[17px] flex-col items-center justify-center gap-px rounded-[2px] border border-white bg-gradient-to-r from-[#cddbfd] to-[#b9ccfa] shadow-[inset_-1px_-1px_0_#9db5ea]">
            {[0, 1, 2, 3].map((i) => (
              <div key={i} className="h-px w-[7px] bg-[#f0f5ff] shadow-[0_1px_0_#8ba6e2]" />
            ))}
          </div>
          <div className="flex-1" />
          <ScrollButton dir="down" />
        </div>
        <div className="flex-1 border-l border-[#c9c6b6] bg-[#f8f7f0]" />
      </div>
      <div className="flex h-[17px] shrink-0 border-l-2 border-[#8b897c] bg-[#f6f6f1]">
        <ScrollButton dir="left" className="h-[17px] w-[16px]" />
        <div className="flex w-[517px] items-center justify-center gap-px rounded-[2px] border border-white bg-gradient-to-b from-[#cddbfd] to-[#b9ccfa] shadow-[inset_-1px_-1px_0_#9db5ea]">
          {[0, 1, 2, 3].map((i) => (
            <div key={i} className="h-[7px] w-px bg-[#f0f5ff] shadow-[1px_0_0_#8ba6e2]" />
          ))}
        </div>
        <div className="flex-1" />
        <ScrollButton dir="right" />
        <div className="w-[19px] bg-[#ece9d8]" />
      </div>
      <div className="h-[5px] shrink-0 border-b border-t border-b-[#fffef7] border-t-[#8b897c] bg-[#ece9d8]" />
      <StatusBar />
      <Taskbar />
    </div>
  );
}
